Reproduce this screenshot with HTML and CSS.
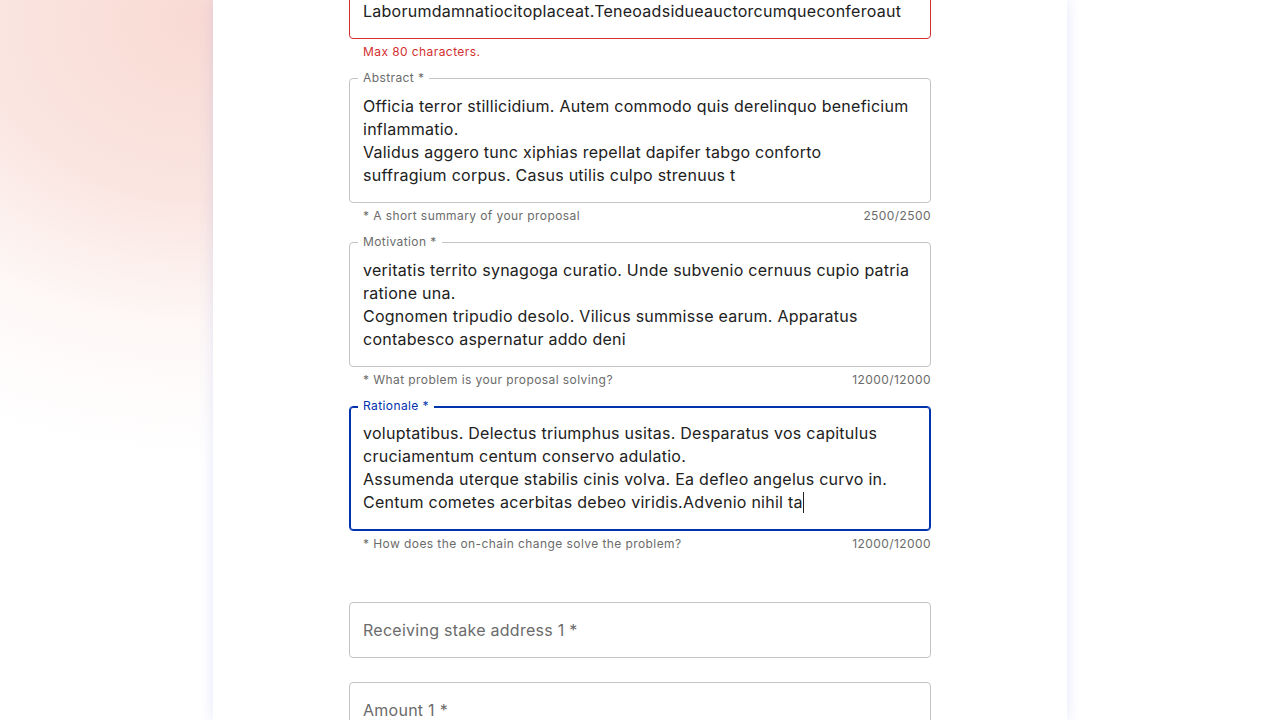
FILE: index.html
```html
<!DOCTYPE html>
<html lang="en">
<head>
<meta charset="utf-8">
<title>Proposal form</title>
<link rel="stylesheet" href="styles.css">
</head>
<body>
<div class="page">
  <main class="card">
    <form class="form">
      <div class="field field-first">
        <div class="box box-single box-error">
          <div class="value single">Laborumdamnatiocitoplaceat.Teneoadsidueauctorcumqueconferoaut</div>
        </div>
        <div class="helper"><span class="err">Max 80 characters.</span></div>
      </div>

      <div class="field">
        <div class="box box-multi">
          <span class="label">Abstract *</span>
          <div class="value">
            <div class="line">Officia terror stillicidium. Autem commodo quis derelinquo beneficium</div>
            <div class="line">inflammatio.</div>
            <div class="line">Validus aggero tunc xiphias repellat dapifer tabgo conforto</div>
            <div class="line">suffragium corpus. Casus utilis culpo strenuus t</div>
          </div>
        </div>
        <div class="helper"><span>* A short summary of your proposal</span><span>2500/2500</span></div>
      </div>

      <div class="field">
        <div class="box box-multi">
          <span class="label">Motivation *</span>
          <div class="value">
            <div class="line">veritatis territo synagoga curatio. Unde subvenio cernuus cupio patria</div>
            <div class="line">ratione una.</div>
            <div class="line">Cognomen tripudio desolo. Vilicus summisse earum. Apparatus</div>
            <div class="line">contabesco aspernatur addo deni</div>
          </div>
        </div>
        <div class="helper"><span>* What problem is your proposal solving?</span><span>12000/12000</span></div>
      </div>

      <div class="field field-last-text">
        <div class="box box-multi box-focus">
          <span class="label label-focus">Rationale *</span>
          <div class="value">
            <div class="line">voluptatibus. Delectus triumphus usitas. Desparatus vos capitulus</div>
            <div class="line">cruciamentum centum conservo adulatio.</div>
            <div class="line">Assumenda uterque stabilis cinis volva. Ea defleo angelus curvo in.</div>
            <div class="line">Centum cometes acerbitas debeo viridis.Advenio nihil ta<span class="caret"></span></div>
          </div>
        </div>
        <div class="helper"><span>* How does the on-chain change solve the problem?</span><span>12000/12000</span></div>
      </div>

      <div class="field field-input">
        <div class="box box-single">
          <div class="value single placeholder">Receiving stake address 1 *</div>
        </div>
      </div>

      <div class="field field-input">
        <div class="box box-single">
          <div class="value single placeholder">Amount 1 *</div>
        </div>
      </div>
    </form>
  </main>
</div>
</body>
</html>
```

FILE: styles.css
```css
* { box-sizing: border-box; }

html, body {
  margin: 0;
  padding: 0;
  height: 100%;
}

body {
  font-family: "Inter", "Open Sans", sans-serif;
  color: #212121;
  background-color: #ffffff;
  background-image:
    radial-gradient(ellipse 540px 440px at 200px 20px, rgba(249, 218, 212, 1) 0%, rgba(249, 222, 216, 0.78) 40%, rgba(251, 236, 232, 0.38) 70%, rgba(255, 255, 255, 0) 100%);
  overflow: hidden;
}

.page {
  height: 720px;
  overflow: hidden;
}

.card {
  width: 854px;
  height: 100%;
  margin: 0 auto;
  background: #ffffff;
  box-shadow: 0 0 14px rgba(70, 90, 210, 0.14);
}

.form {
  width: 582px;
  margin: 0 auto;
  display: flex;
  flex-direction: column;
}

.field {
  margin-bottom: 17px;
}

.field-first {
  margin-top: -17px;
}

.field-last-text {
  margin-bottom: 49px;
}

.field-input {
  margin-bottom: 24px;
}

.box {
  position: relative;
  border: 1px solid #c4c4c4;
  border-radius: 4px;
  background: #ffffff;
}

.box-error {
  border-color: #d32f2f;
}

.box-focus {
  border-color: #0033ad;
  box-shadow: inset 0 0 0 1px #0033ad;
}

.box-single {
  height: 56px;
  padding: 0 14px 0 13px;
  display: flex;
  align-items: center;
}

.box-multi {
  height: 125px;
  padding: 16px 14px 15px 13px;
}

.box-focus.box-multi {
  padding-top: 15px;
  padding-bottom: 16px;
}

.value {
  font-size: 16px;
  line-height: 23px;
  letter-spacing: 0.26px;
  color: #212121;
}

.single {
  white-space: nowrap;
  overflow: hidden;
  width: 100%;
}

.line {
  white-space: nowrap;
}

.placeholder {
  color: #6b6b6b;
}

.label {
  position: absolute;
  top: -8px;
  left: 8px;
  padding: 0 5px;
  background: #ffffff;
  font-size: 12px;
  line-height: 14px;
  letter-spacing: 0.4px;
  color: #6b6b6b;
}

.label-focus {
  color: #0033ad;
}

.caret {
  display: inline-block;
  width: 0;
  height: 21px;
  border-left: 1px solid #212121;
  vertical-align: -5px;
}

.helper {
  margin-top: 4px;
  padding-left: 14px;
  display: flex;
  justify-content: space-between;
  font-size: 12px;
  line-height: 18px;
  letter-spacing: 0.42px;
  color: #6b6b6b;
}

.err {
  color: #d32f2f;
}
```
